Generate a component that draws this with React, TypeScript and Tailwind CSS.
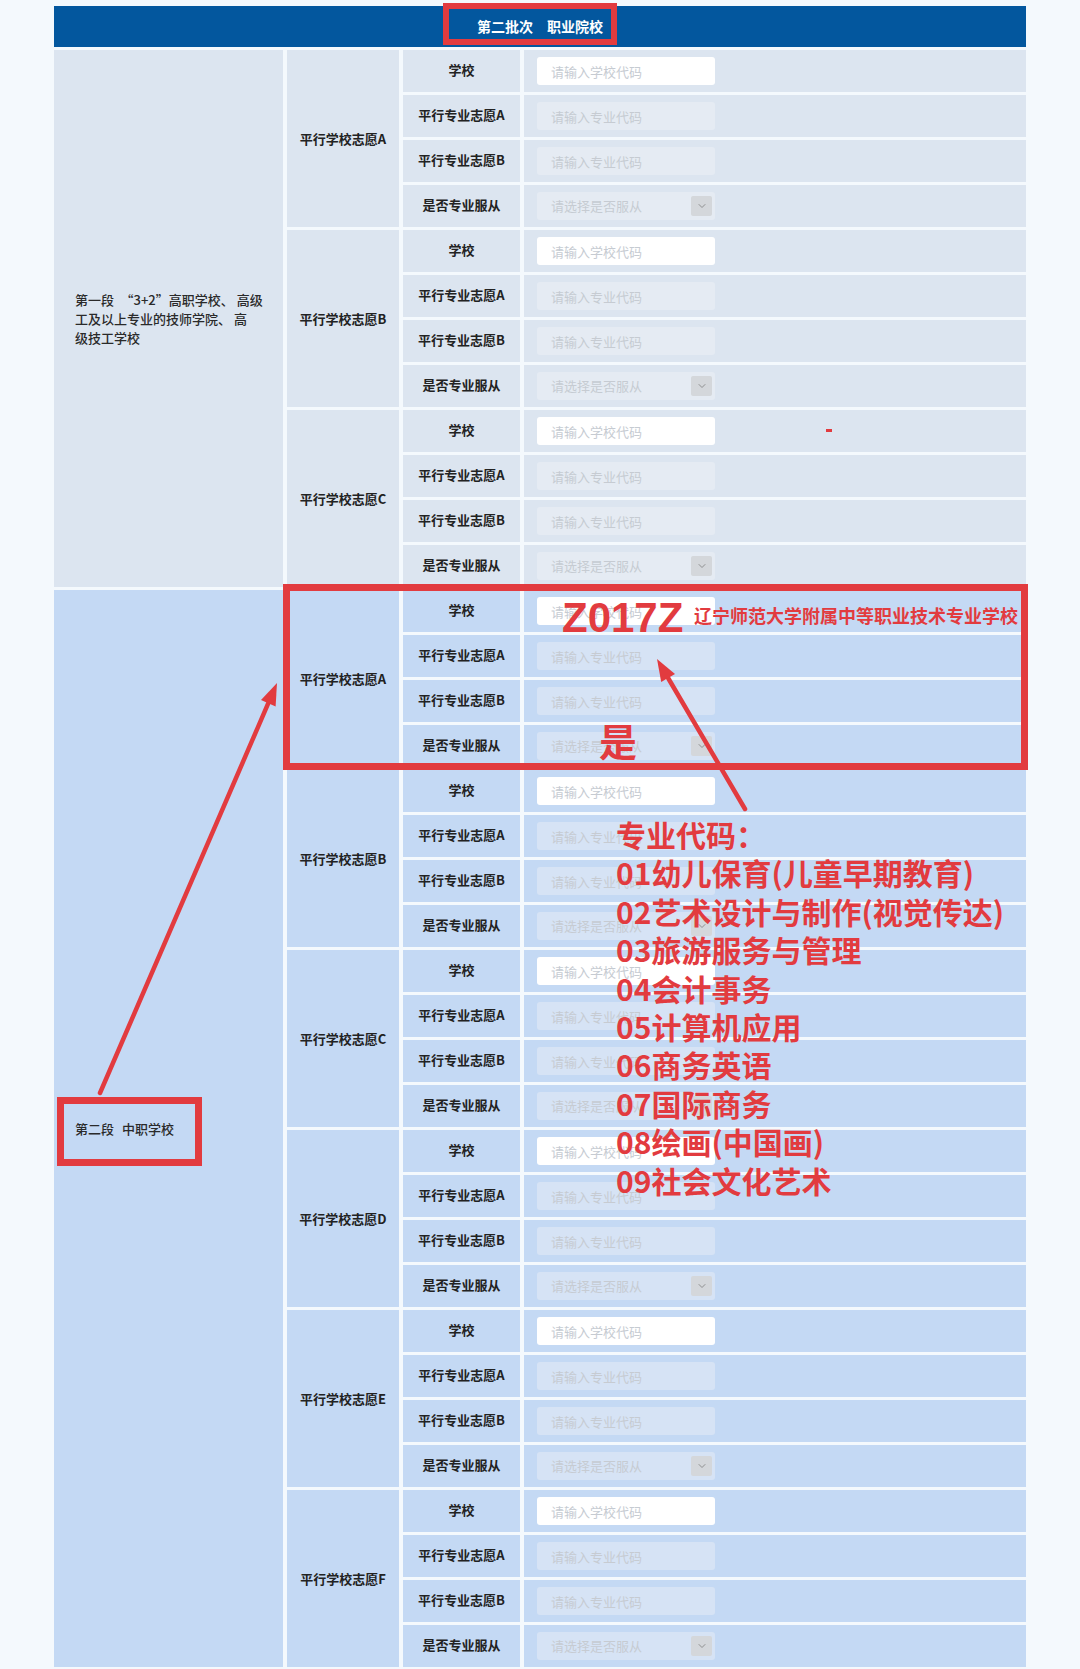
import { ChevronDown } from 'lucide-react'

type Tone = 'grey' | 'blue'

const tones: Record<Tone, { cell: string; field: string }> = {
  grey: { cell: 'bg-[#dce5f0]', field: 'bg-[#e5ebf3]' },
  blue: { cell: 'bg-[#c4d9f4]', field: 'bg-[#d6e3f5]' },
}

const rows = [
  { label: '学校', kind: 'school' },
  { label: '平行专业志愿A', kind: 'major' },
  { label: '平行专业志愿B', kind: 'major' },
  { label: '是否专业服从', kind: 'select' },
] as const

function Field({ kind, tone }: { kind: 'school' | 'major' | 'select'; tone: Tone }) {
  if (kind === 'select') {
    return (
      <div className={`flex h-[28px] w-[178px] items-center justify-between rounded-[3px] pl-[14px] pr-[3px] ${tones[tone].field}`}>
        <span className="text-[13px] text-[#c6cbd2]">请选择是否服从</span>
        <span className="flex h-[20px] w-[21px] items-center justify-center rounded-[2px] bg-[#d4d7db]">
          <ChevronDown size={12} strokeWidth={1.5} className="text-[#777]" />
        </span>
      </div>
    )
  }
  return (
    <input
      readOnly
      placeholder={kind === 'school' ? '请输入学校代码' : '请输入专业代码'}
      className={`h-[28px] w-[178px] rounded-[3px] px-[14px] text-[13px] outline-none placeholder:text-[#c6cbd2] ${
        kind === 'school' ? 'bg-white' : tones[tone].field
      }`}
    />
  )
}

function Group({ name, tone }: { name: string; tone: Tone }) {
  return (
    <div className="flex gap-[4px]">
      <div className={`flex w-[112px] items-center justify-center text-[13px] font-bold text-[#222] ${tones[tone].cell}`}>
        平行学校志愿{name}
      </div>
      <div className="flex flex-1 flex-col gap-[3px]">
        {rows.map((r) => (
          <div key={r.label} className="flex h-[42px] gap-[4px]">
            <div className={`flex w-[117px] items-center justify-center pb-[2px] text-[13px] font-bold text-[#222] ${tones[tone].cell}`}>
              {r.label}
            </div>
            <div className={`flex flex-1 items-center pl-[13px] ${tones[tone].cell}`}>
              <Field kind={r.kind} tone={tone} />
            </div>
          </div>
        ))}
      </div>
    </div>
  )
}

function Section({ tone, names, children }: { tone: Tone; names: string[]; children: React.ReactNode }) {
  return (
    <div className="flex gap-[4px]">
      <div className={`flex w-[229px] items-center px-[21px] text-[13px] leading-[19px] font-medium text-[#2a2a2a] ${tones[tone].cell}`}>
        <div>{children}</div>
      </div>
      <div className="flex flex-1 flex-col gap-[3px]">
        {names.map((n) => (
          <Group key={n} name={n} tone={tone} />
        ))}
      </div>
    </div>
  )
}

const majors = [
  '01幼儿保育(儿童早期教育)',
  '02艺术设计与制作(视觉传达)',
  '03旅游服务与管理',
  '04会计事务',
  '05计算机应用',
  '06商务英语',
  '07国际商务',
  '08绘画(中国画)',
  '09社会文化艺术',
]

export default function App() {
  return (
    <div className="relative min-h-[1669px] w-[1080px] bg-[#f4f9fd] px-[54px] pt-[6px] font-['Noto_Sans_CJK_SC','Liberation_Sans',sans-serif]">
      <header className="flex h-[41px] items-center justify-center bg-[#03579e] text-[14px] font-bold text-white">
        第二批次　职业院校
      </header>

      <div className="mt-[3px] flex flex-col gap-[3px]">
        <Section tone="grey" names={['A', 'B', 'C']}>
          <div className="whitespace-nowrap">第一段　“3+2”高职学校、 高级</div>
          <div className="whitespace-nowrap">工及以上专业的技师学院、 高</div>
          <div className="whitespace-nowrap">级技工学校</div>
        </Section>
        <Section tone="blue" names={['A', 'B', 'C', 'D', 'E', 'F']}>
          <div className="flex gap-[8px] whitespace-nowrap">
            <span>第二段</span>
            <span>中职学校</span>
          </div>
        </Section>
      </div>

      {/* annotations drawn over the form */}
      <div className="pointer-events-none absolute left-[443px] top-[3px] h-[42px] w-[174px] border-[6px] border-[#e23b3f]" />
      <div className="pointer-events-none absolute left-[283px] top-[584px] h-[186px] w-[745px] border-[7px] border-[#e23b3f]" />
      <div className="pointer-events-none absolute left-[57px] top-[1097px] h-[69px] w-[145px] border-[7px] border-[#e23b3f]" />
      <div className="pointer-events-none absolute left-[826px] top-[429px] h-[3px] w-[6px] bg-[#e23b3f]" />

      <svg className="pointer-events-none absolute left-0 top-0" width="1080" height="1669" viewBox="0 0 1080 1669">
        <g stroke="#e23b3f" strokeWidth="4.5" strokeLinecap="round">
          <line x1="100" y1="1093" x2="268.3" y2="703.2" />
          <line x1="745" y1="809" x2="668.1" y2="678" />
        </g>
        <g fill="#e23b3f">
          <polygon points="277,683 275.6,706.4 261,700" />
          <polygon points="657,659 675,674 661.2,682" />
        </g>
      </svg>

      <div className="pointer-events-none absolute left-[562px] top-[597px] font-['Liberation_Sans',sans-serif] text-[42px] leading-none font-bold text-[#e23b3f]">
        Z017Z
      </div>
      <div className="pointer-events-none absolute left-[694px] top-[605px] whitespace-nowrap text-[18px] leading-[20px] font-bold text-[#e23b3f]">
        辽宁师范大学附属中等职业技术专业学校
      </div>
      <div className="pointer-events-none absolute left-[599px] top-[721px] text-[38px] leading-none font-bold text-[#e23b3f]">
        是
      </div>
      <div className="pointer-events-none absolute left-[616px] top-[815px] text-[30px] leading-[38.4px] font-bold text-[#e23b3f]">
        <div>专业代码：</div>
        {majors.map((m) => (
          <div key={m} className="whitespace-nowrap">
            {m}
          </div>
        ))}
      </div>
    </div>
  )
}
